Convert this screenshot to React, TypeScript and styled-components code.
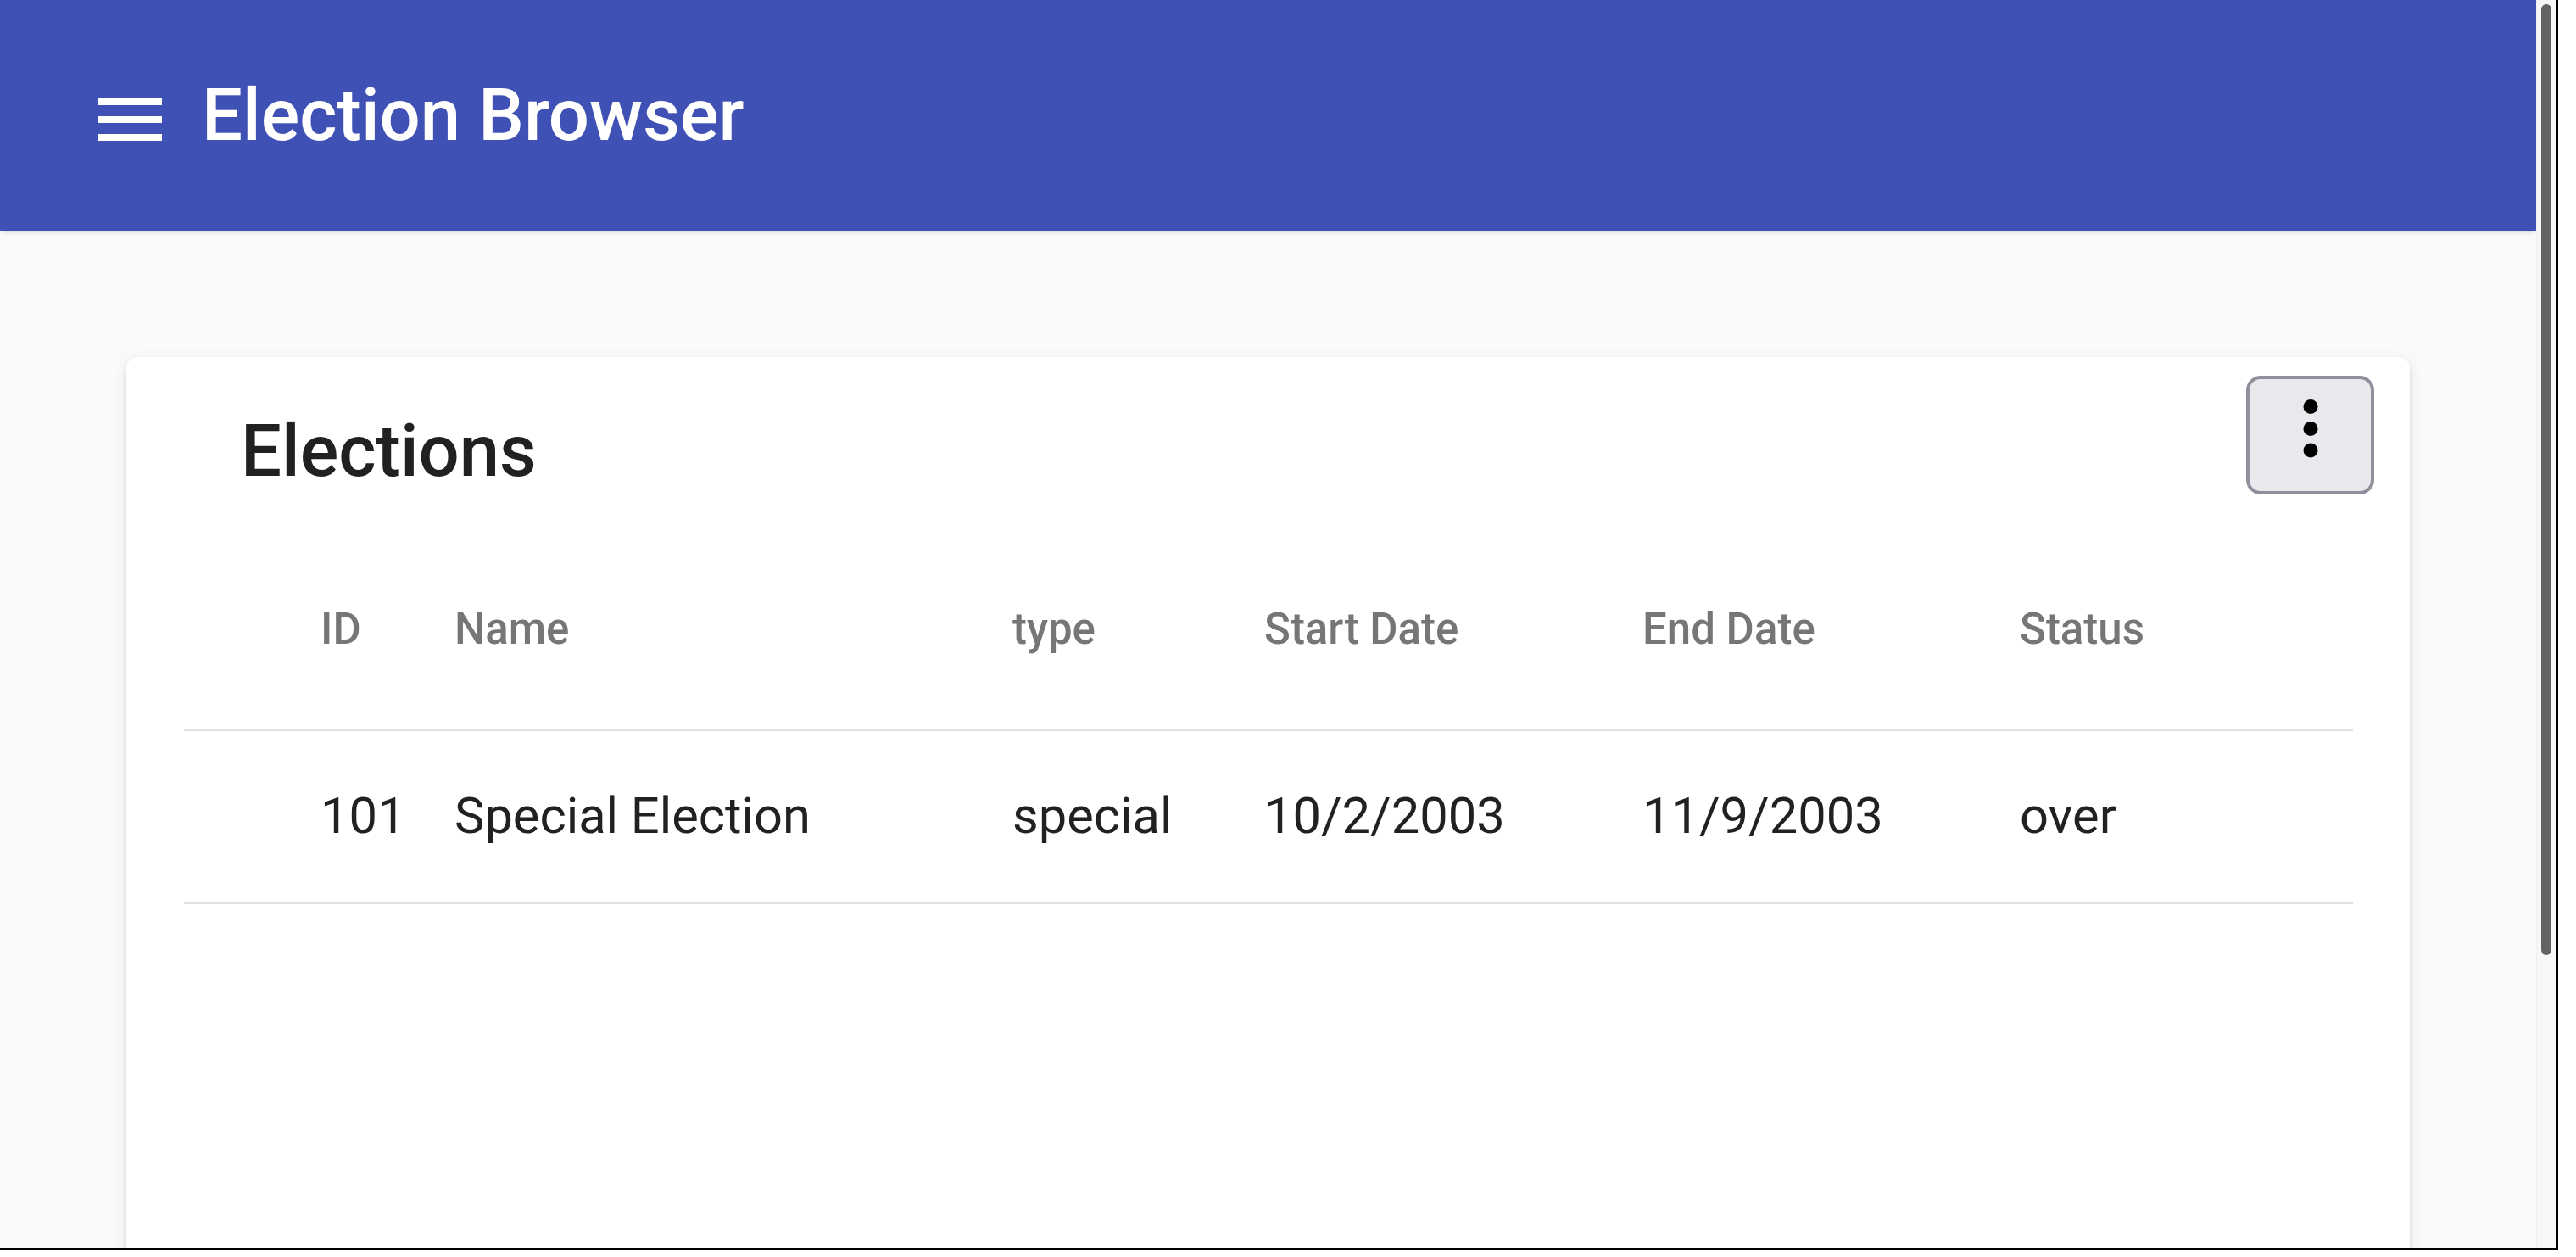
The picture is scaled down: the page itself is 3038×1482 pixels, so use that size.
import React from "react";
import styled, { createGlobalStyle } from "styled-components";

const GlobalStyle = createGlobalStyle`
  html, body {
    margin: 0;
    padding: 0;
    background: #ffffff;
    overflow: hidden;
  }
  body {
    font-family: Roboto, "Noto Sans", "Liberation Sans", sans-serif;
  }
  * { box-sizing: border-box; }
`;

const Screen = styled.div`
  width: 3038px;
  height: 1482px;
  background: #ffffff;
  overflow: hidden;
`;

const Window = styled.div`
  width: 3017px;
  height: 1474px;
  display: flex;
  border-right: 3px solid #000;
  border-bottom: 3px solid #000;
  overflow: hidden;
`;

const Viewport = styled.div`
  flex: 1;
  display: flex;
  flex-direction: column;
  background: #fafafa;
  overflow: hidden;
`;

const AppBar = styled.header`
  flex: 0 0 272px;
  display: flex;
  align-items: center;
  padding-left: 115px;
  gap: 47px;
  background: #3f51b5;
  color: #fff;
  box-shadow: 0 3px 6px -2px rgba(0, 0, 0, 0.18);
  position: relative;
  z-index: 1;
`;

const MenuIcon = styled.svg`
  width: 76px;
  height: 50px;
  margin-top: 10px;
  fill: #fff;
  flex: none;
`;

const AppTitle = styled.h1`
  margin: 0;
  font-size: 85px;
  font-weight: 500;
  line-height: 1.2;
  letter-spacing: 0;
`;

const Main = styled.main`
  flex: 1;
  padding: 149px 149px 0 149px;
  overflow: hidden;
`;

const Card = styled.section`
  height: 1300px;
  background: #fff;
  border-radius: 14px;
  box-shadow: 0 10px 3px -7px rgba(0, 0, 0, 0.2), 0 7px 7px 0 rgba(0, 0, 0, 0.1),
    0 3px 17px 0 rgba(0, 0, 0, 0.08);
`;

const CardToolbar = styled.div`
  height: 199px;
  display: flex;
  align-items: flex-start;
  justify-content: space-between;
  padding: 22px 42px 0 135px;
`;

const CardTitle = styled.h2`
  margin: 38px 0 0 0;
  font-size: 85px;
  font-weight: 500;
  line-height: 1.2;
  color: #212121;
`;

const KebabButton = styled.button`
  width: 151px;
  height: 140px;
  display: flex;
  align-items: center;
  justify-content: center;
  padding: 0 0 16px 0;
  background: #e9e8ed;
  border: 4px solid #918f9b;
  border-radius: 17px;
  cursor: pointer;
`;

const KebabIcon = styled.svg`
  width: 18px;
  height: 69px;
  fill: #000;
`;

const Table = styled.div`
  margin: 0 67px 0 68px;
`;

const Row = styled.div<{ $head?: boolean }>`
  display: grid;
  grid-template-columns: 159px 158px 658px 297px 446px 445px 1fr;
  align-items: center;
  height: ${(p) => (p.$head ? "242px" : "204px")};
  padding-top: ${(p) => (p.$head ? "4px" : "0")};
  border-bottom: 2px solid #e0e0e0;
`;

const Cell = styled.div<{ $head?: boolean }>`
  padding-left: 2px;
  font-size: ${(p) => (p.$head ? "51px" : "59.6px")};
  font-weight: ${(p) => (p.$head ? 500 : 400)};
  color: ${(p) => (p.$head ? "#767676" : "#212121")};
  line-height: 1.2;
  white-space: nowrap;
`;

const ScrollGutter = styled.div`
  flex: 0 0 22px;
  padding: 5px 5px 0 5px;
  background: #f7f7f7;
  border-left: 1px solid #f0f0f0;
`;

const ScrollThumb = styled.div`
  width: 12px;
  height: 1121px;
  background: #636363;
  border-radius: 6px;
`;

const columns = ["", "ID", "Name", "type", "Start Date", "End Date", "Status"];
const rows = [["", "101", "Special Election", "special", "10/2/2003", "11/9/2003", "over"]];

export default function App() {
  return (
    <Screen>
      <GlobalStyle />
      <Window>
        <Viewport>
          <AppBar>
            <MenuIcon viewBox="0 0 76 50" aria-hidden>
              <rect x="0" y="0" width="76" height="8" />
              <rect x="0" y="21" width="76" height="8" />
              <rect x="0" y="42" width="76" height="8" />
            </MenuIcon>
            <AppTitle>Election Browser</AppTitle>
          </AppBar>
          <Main>
            <Card>
              <CardToolbar>
                <CardTitle>Elections</CardTitle>
                <KebabButton aria-label="more">
                  <KebabIcon viewBox="0 0 18 69" aria-hidden>
                    <circle cx="9" cy="8.5" r="8.5" />
                    <circle cx="9" cy="34.5" r="8.5" />
                    <circle cx="9" cy="60" r="8.5" />
                  </KebabIcon>
                </KebabButton>
              </CardToolbar>
              <Table>
                <Row $head>
                  {columns.map((c, i) => (
                    <Cell $head key={i}>
                      {c}
                    </Cell>
                  ))}
                </Row>
                {rows.map((r, ri) => (
                  <Row key={ri}>
                    {r.map((v, i) => (
                      <Cell key={i}>{v}</Cell>
                    ))}
                  </Row>
                ))}
              </Table>
            </Card>
          </Main>
        </Viewport>
        <ScrollGutter>
          <ScrollThumb />
        </ScrollGutter>
      </Window>
    </Screen>
  );
}
